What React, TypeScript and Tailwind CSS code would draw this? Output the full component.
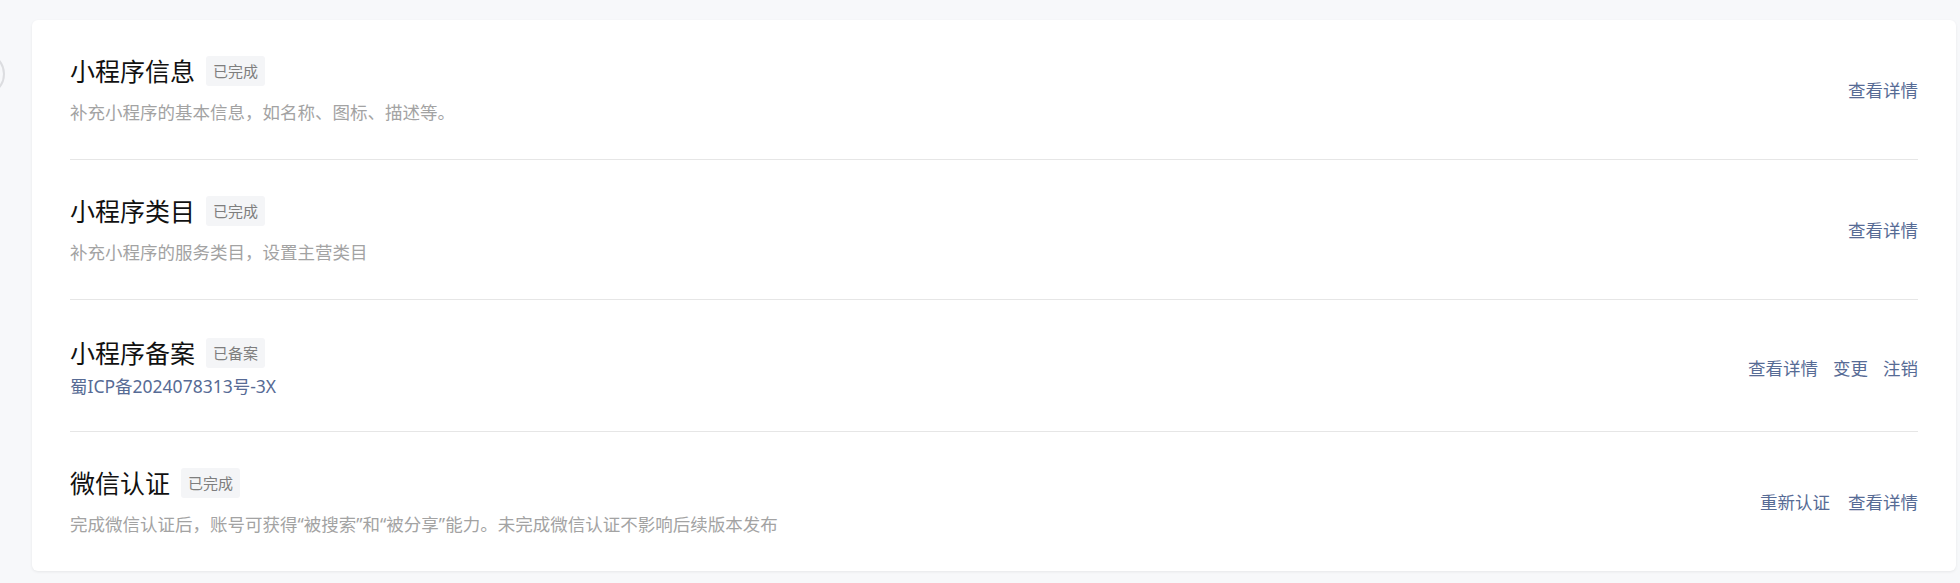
import React from 'react';

interface Row {
  title: string;
  badge: string;
  desc: string;
  descIsLink?: boolean;
  actions: string[];
}

const rows: Row[] = [
  {
    title: '小程序信息',
    badge: '已完成',
    desc: '补充小程序的基本信息，如名称、图标、描述等。',
    actions: ['查看详情'],
  },
  {
    title: '小程序类目',
    badge: '已完成',
    desc: '补充小程序的服务类目，设置主营类目',
    actions: ['查看详情'],
  },
  {
    title: '小程序备案',
    badge: '已备案',
    desc: '蜀ICP备2024078313号-3X',
    descIsLink: true,
    actions: ['查看详情', '变更', '注销'],
  },
  {
    title: '微信认证',
    badge: '已完成',
    desc: '完成微信认证后，账号可获得“被搜索”和“被分享”能力。未完成微信认证不影响后续版本发布',
    actions: ['重新认证', '查看详情'],
  },
];

function SettingRow({ row, last }: { row: Row; last: boolean }) {
  return (
    <div
      className={
        'flex items-center justify-between ' +
        (row.descIsLink ? 'pt-[38px] pb-[32px] ' : 'pt-9 pb-[34px] ') +
        (last ? '' : 'border-b border-[#e6e6e6]')
      }
    >
      <div className="flex flex-col">
        <div className="flex items-center gap-[11px]">
          <span className="text-[25px] leading-[30px] text-[#111111]">{row.title}</span>
          <span className="h-[30px] px-[7px] flex items-center rounded-[3px] bg-[#f4f5f7] text-[15px] text-[#7e7e7e]">
            {row.badge}
          </span>
        </div>
        {row.descIsLink ? (
          <a className="mt-[6px] text-[17.5px] leading-[25px] text-[#576b95] cursor-pointer">{row.desc}</a>
        ) : (
          <p className="mt-[14px] text-[17.5px] leading-[25px] text-[#a3a3a3]">{row.desc}</p>
        )}
      </div>
      <div className={'flex items-center ' + (last ? 'gap-[18px]' : 'gap-[15px]')}>
        {row.actions.map((a) => (
          <a key={a} className="text-[17.5px] leading-[25px] text-[#576b95] cursor-pointer">
            {a}
          </a>
        ))}
      </div>
    </div>
  );
}

export default function App() {
  return (
    <div
      className="relative w-[1960px] h-[583px] bg-[#f7f8fa] pt-5 pl-8 pr-1 overflow-hidden"
      style={{ fontFamily: '"Noto Sans", "Noto Sans CJK SC", sans-serif' }}
    >
      {/* collapse toggle peeking from the left */}
      <div className="absolute left-[-39px] top-[52px] w-11 h-11 rounded-full border-2 border-[#dcdde0] bg-[#f7f8fa]" />
      <div className="bg-white rounded-[6px] shadow-[0_1px_3px_rgba(0,0,0,0.07)] px-[38px]">
        {rows.map((r, i) => (
          <SettingRow key={r.title} row={r} last={i === rows.length - 1} />
        ))}
      </div>
    </div>
  );
}
